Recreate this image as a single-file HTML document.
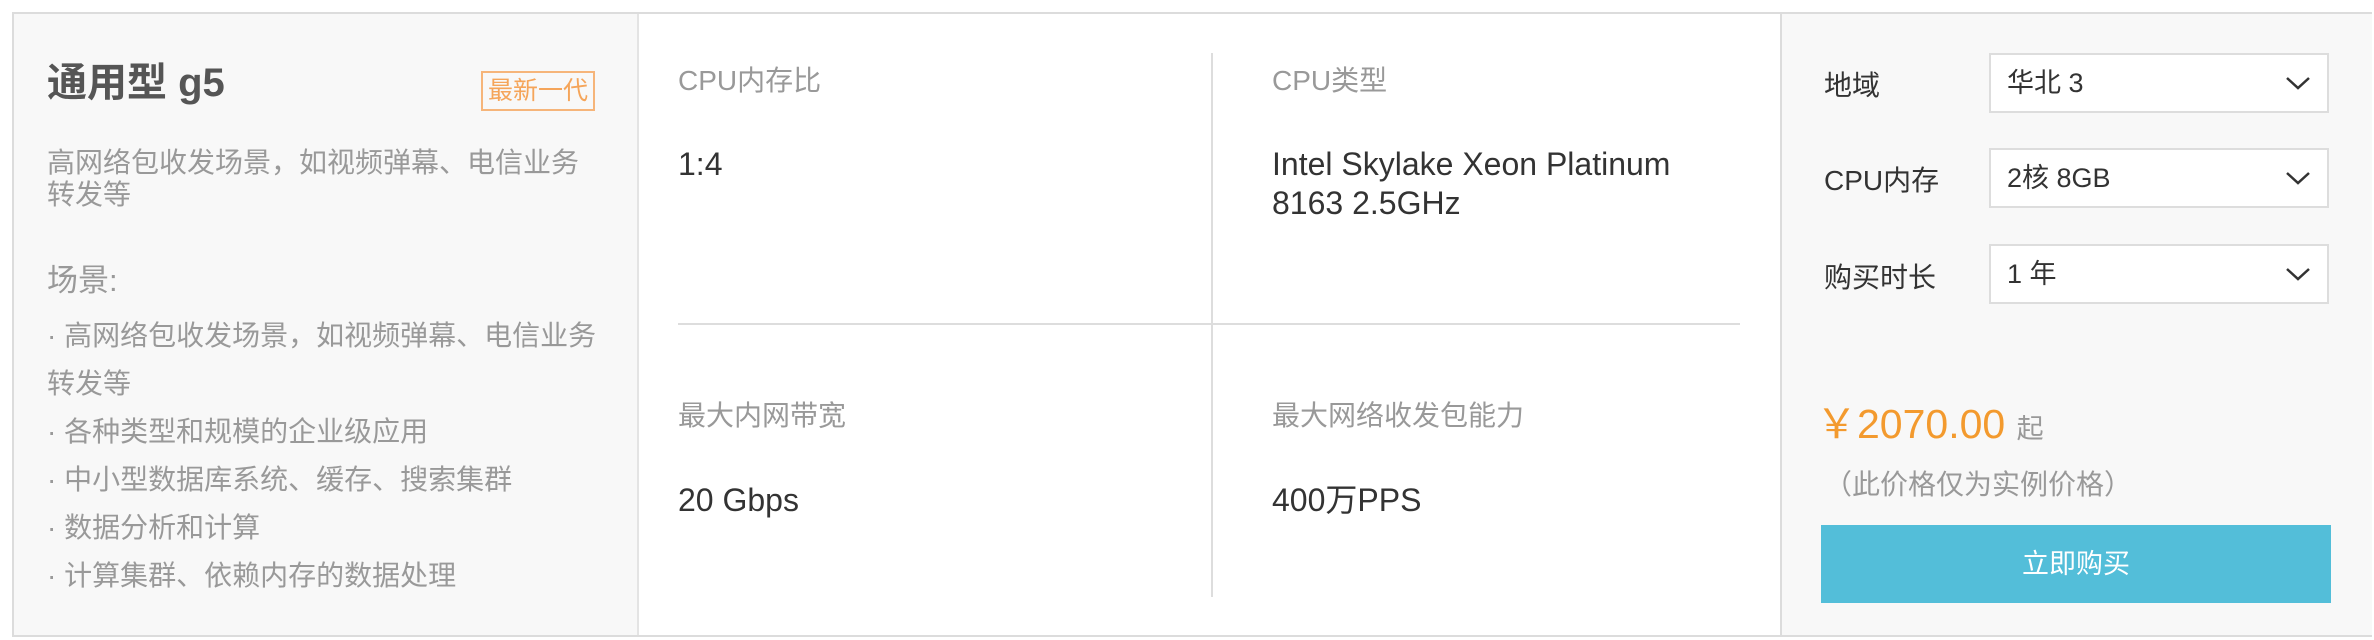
<!DOCTYPE html>
<html><head><meta charset="utf-8"><style>
*{margin:0;padding:0;box-sizing:border-box}
body{width:2374px;height:640px;background:#fff;font-family:"Liberation Sans","Noto Sans CJK SC",sans-serif;position:relative;overflow:hidden}
.box{position:absolute;left:12px;top:12px;width:2360px;height:625px;border:2px solid #dcdcdc;background:#fff}
.abs{position:absolute;white-space:nowrap}
.lp{position:absolute;left:0;top:0;width:625px;height:621px;background:#f8f8f8;border-right:2px solid #e4e4e4}
.rp{position:absolute;left:1766px;top:0;width:592px;height:621px;background:#f8f8f8;border-left:2px solid #dcdcdc}
.g{color:#999}
.sel{position:absolute;left:207px;width:340px;height:60px;border:2px solid #ddd;background:#fff;font-size:27px;color:#333;padding-left:16px;line-height:56px}
.sel svg{position:absolute;right:16px;top:20px}
.lab{position:absolute;left:42px;font-size:28px;line-height:34px;color:#333;white-space:nowrap}
.ml{font-size:28px;line-height:34px}
.mv{font-size:32px;line-height:39px;color:#333}
</style></head><body>
<div class="box">
 <div class="lp">
  <div class="abs" style="left:33px;top:45px;font-size:40px;line-height:48px;font-weight:bold;color:#555">通用型 g5</div>
  <div class="abs" style="left:467px;top:57px;width:114px;height:40px;border:2px solid #f6b57a;color:#f5a55a;font-size:25px;line-height:36px;text-align:center">最新一代</div>
  <div class="abs g" style="left:33px;top:133px;font-size:28px;line-height:32px;white-space:normal;width:545px">高网络包收发场景，如视频弹幕、电信业务转发等</div>
  <div class="abs g" style="left:33px;top:247px;font-size:31px;line-height:40px">场景:</div>
  <div class="abs g" style="left:33px;top:298px;font-size:28px;line-height:48px;white-space:normal;width:570px">· 高网络包收发场景，如视频弹幕、电信业务转发等<br>· 各种类型和规模的企业级应用<br>· 中小型数据库系统、缓存、搜索集群<br>· 数据分析和计算<br>· 计算集群、依赖内存的数据处理</div>
 </div>
 <div class="abs" style="left:1197px;top:39px;width:2px;height:544px;background:#ddd"></div>
 <div class="abs" style="left:664px;top:309px;width:1062px;height:2px;background:#ddd"></div>
 <div class="abs g ml" style="left:664px;top:50px">CPU内存比</div>
 <div class="abs mv" style="left:664px;top:131px">1:4</div>
 <div class="abs g ml" style="left:1258px;top:50px">CPU类型</div>
 <div class="abs mv" style="left:1258px;top:131px">Intel Skylake Xeon Platinum<br>8163 2.5GHz</div>
 <div class="abs g ml" style="left:664px;top:385px">最大内网带宽</div>
 <div class="abs mv" style="left:664px;top:467px">20 Gbps</div>
 <div class="abs g ml" style="left:1258px;top:385px">最大网络收发包能力</div>
 <div class="abs mv" style="left:1258px;top:467px">400万PPS</div>
 <div class="rp">
  <div class="lab" style="top:55px">地域</div>
  <div class="sel" style="top:39px">华北 3<svg width="26" height="16" viewBox="0 0 26 16"><path d="M2 3l11 10 11-10" fill="none" stroke="#333" stroke-width="2.5"/></svg></div>
  <div class="lab" style="top:150px">CPU内存</div>
  <div class="sel" style="top:134px">2核 8GB<svg width="26" height="16" viewBox="0 0 26 16"><path d="M2 3l11 10 11-10" fill="none" stroke="#333" stroke-width="2.5"/></svg></div>
  <div class="lab" style="top:247px">购买时长</div>
  <div class="sel" style="top:230px">1 年<svg width="26" height="16" viewBox="0 0 26 16"><path d="M2 3l11 10 11-10" fill="none" stroke="#333" stroke-width="2.5"/></svg></div>
  <div class="abs" style="left:34px;top:386px;font-size:41px;line-height:48px;color:#f39a2e">￥2070.00 <span style="font-size:27px;color:#999">起</span></div>
  <div class="abs g" style="left:42px;top:454px;font-size:28px;line-height:34px">（此价格仅为实例价格）</div>
  <div class="abs" style="left:39px;top:511px;width:510px;height:78px;background:#53bed9;color:#fff;font-size:27px;text-align:center;line-height:78px">立即购买</div>
 </div>
</div>
</body></html>
